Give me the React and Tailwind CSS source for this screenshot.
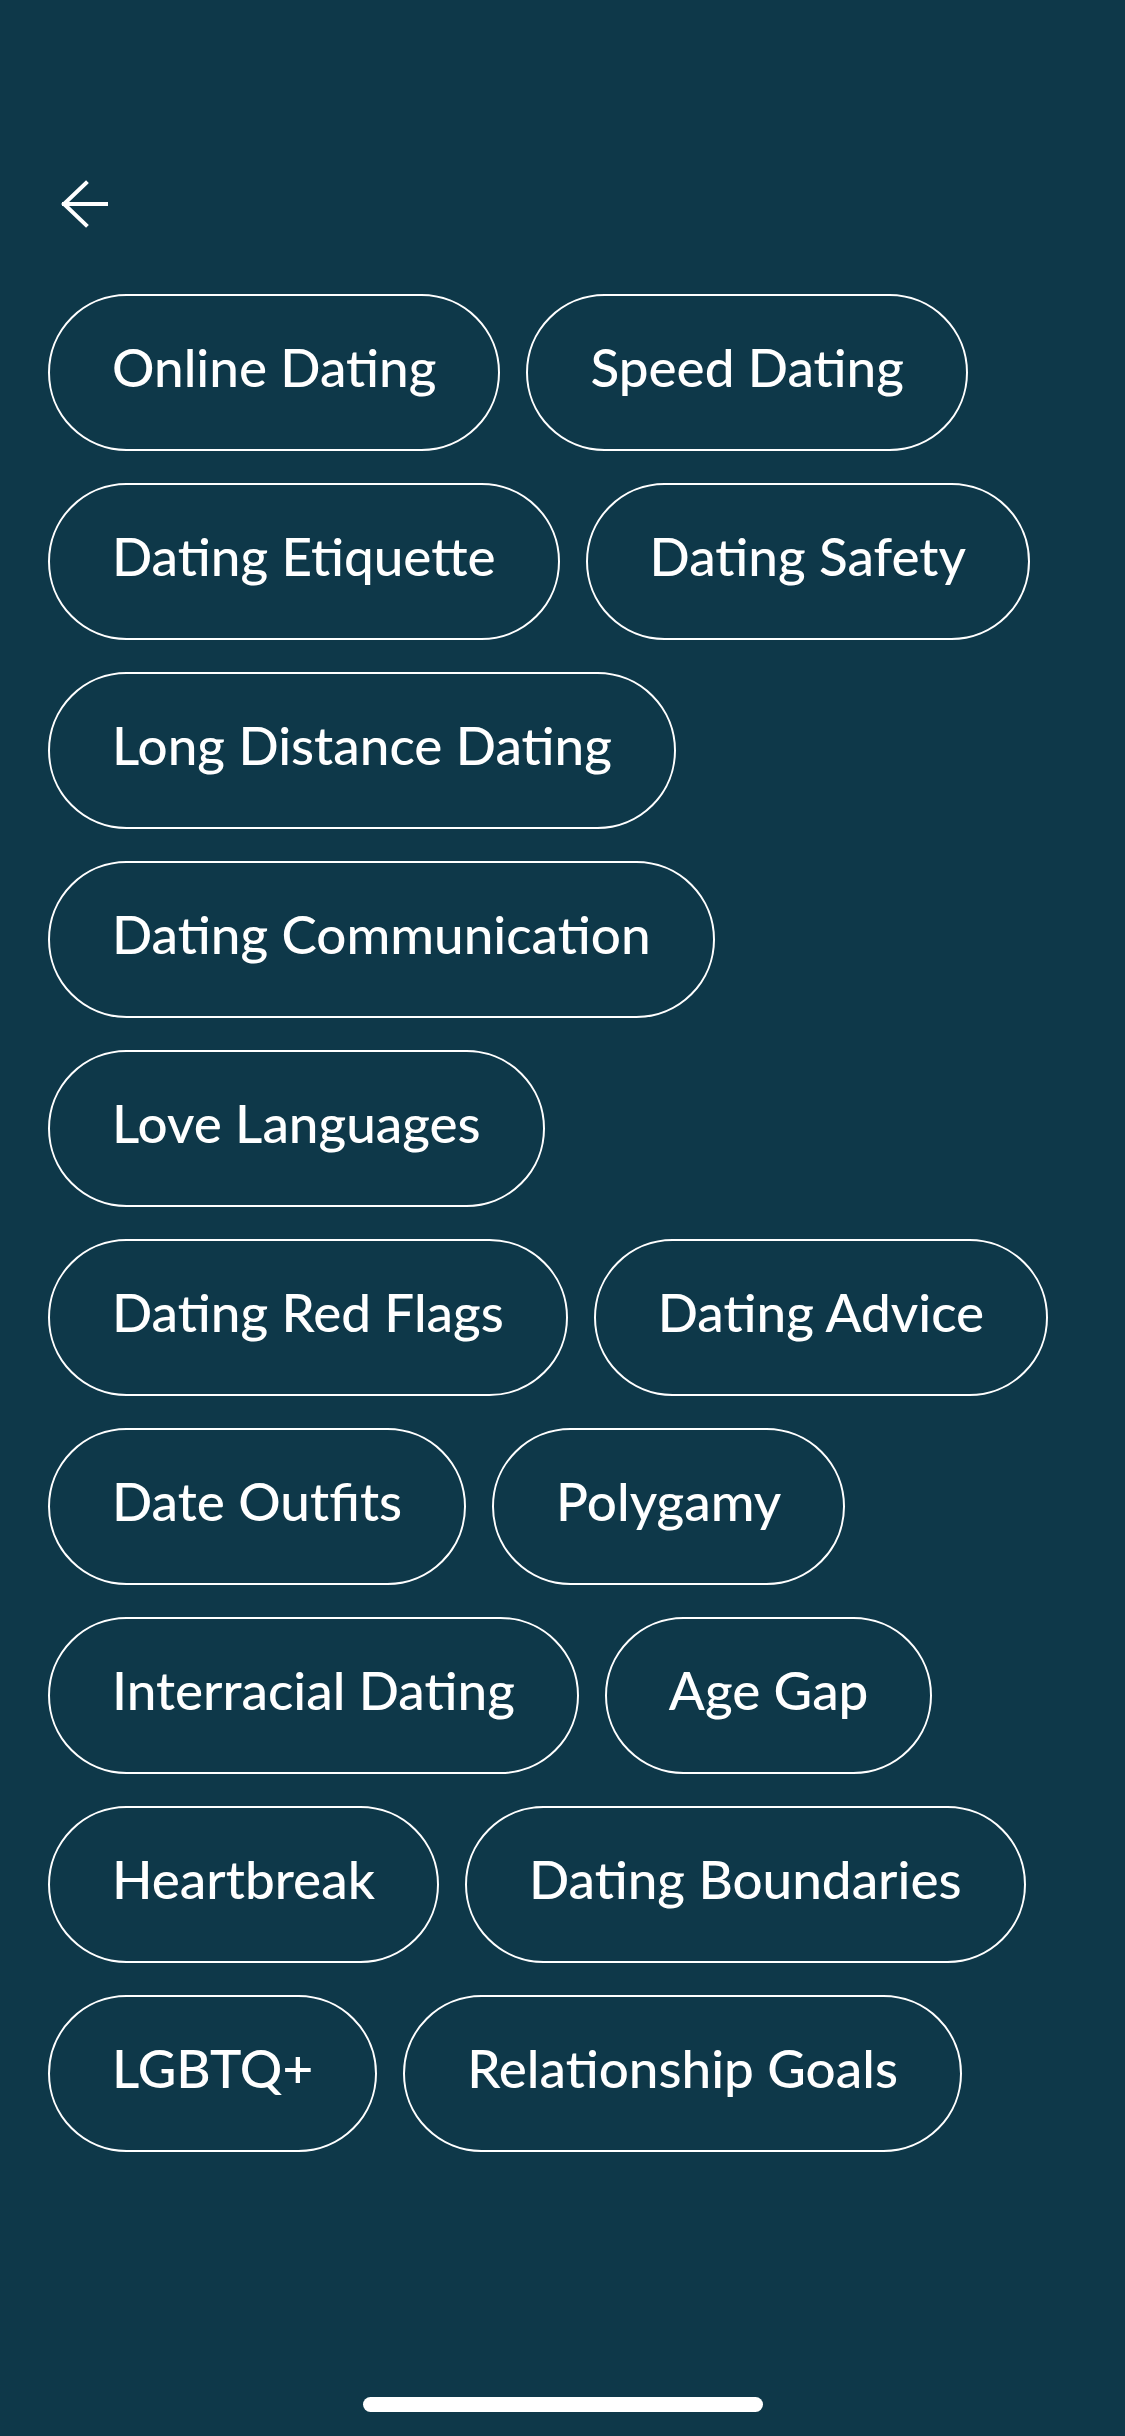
import React from 'react';

const rows = [
    ['Online Dating', 'Speed Dating'],
    ['Dating Etiquette', 'Dating Safety'],
    ['Long Distance Dating'],
    ['Dating Communication'],
    ['Love Languages'],
    ['Dating Red Flags', 'Dating Advice'],
    ['Date Outfits', 'Polygamy'],
    ['Interracial Dating', 'Age Gap'],
    ['Heartbreak', 'Dating Boundaries'],
    ['LGBTQ+', 'Relationship Goals'],
];

const Chip = ({ label }) => (
    <button className="h-[157px] px-[62px] pb-[12px] flex items-center rounded-full border-2 border-white text-white text-[53px] font-medium leading-none whitespace-nowrap">
        {label}
    </button>
);

const App = () => {
    return (
        <div
            className="relative min-h-[2436px] w-full bg-[#0e3849] overflow-hidden"
            style={{ fontFamily: 'Lato, "Noto Sans", sans-serif' }}
        >
            <div className="pt-[180px] pl-[60px]">
                <svg width="48" height="48" viewBox="0 0 48 48" fill="none" stroke="white" strokeWidth="4" strokeLinecap="square">
                    <path d="M26 3 L4 24 L26 45" strokeLinejoin="miter" />
                    <path d="M4 24 H46" />
                </svg>
            </div>

            <div className="mt-[66px] px-[48px] flex flex-col gap-y-[32px]">
                {rows.map((row, i) => (
                    <div key={i} className="flex gap-x-[26px]">
                        {row.map((label) => (
                            <Chip key={label} label={label} />
                        ))}
                    </div>
                ))}
            </div>

            <div className="absolute bottom-[24px] left-1/2 -translate-x-1/2 w-[400px] h-[15px] rounded-full bg-white" />
        </div>
    );
};

export default App;
